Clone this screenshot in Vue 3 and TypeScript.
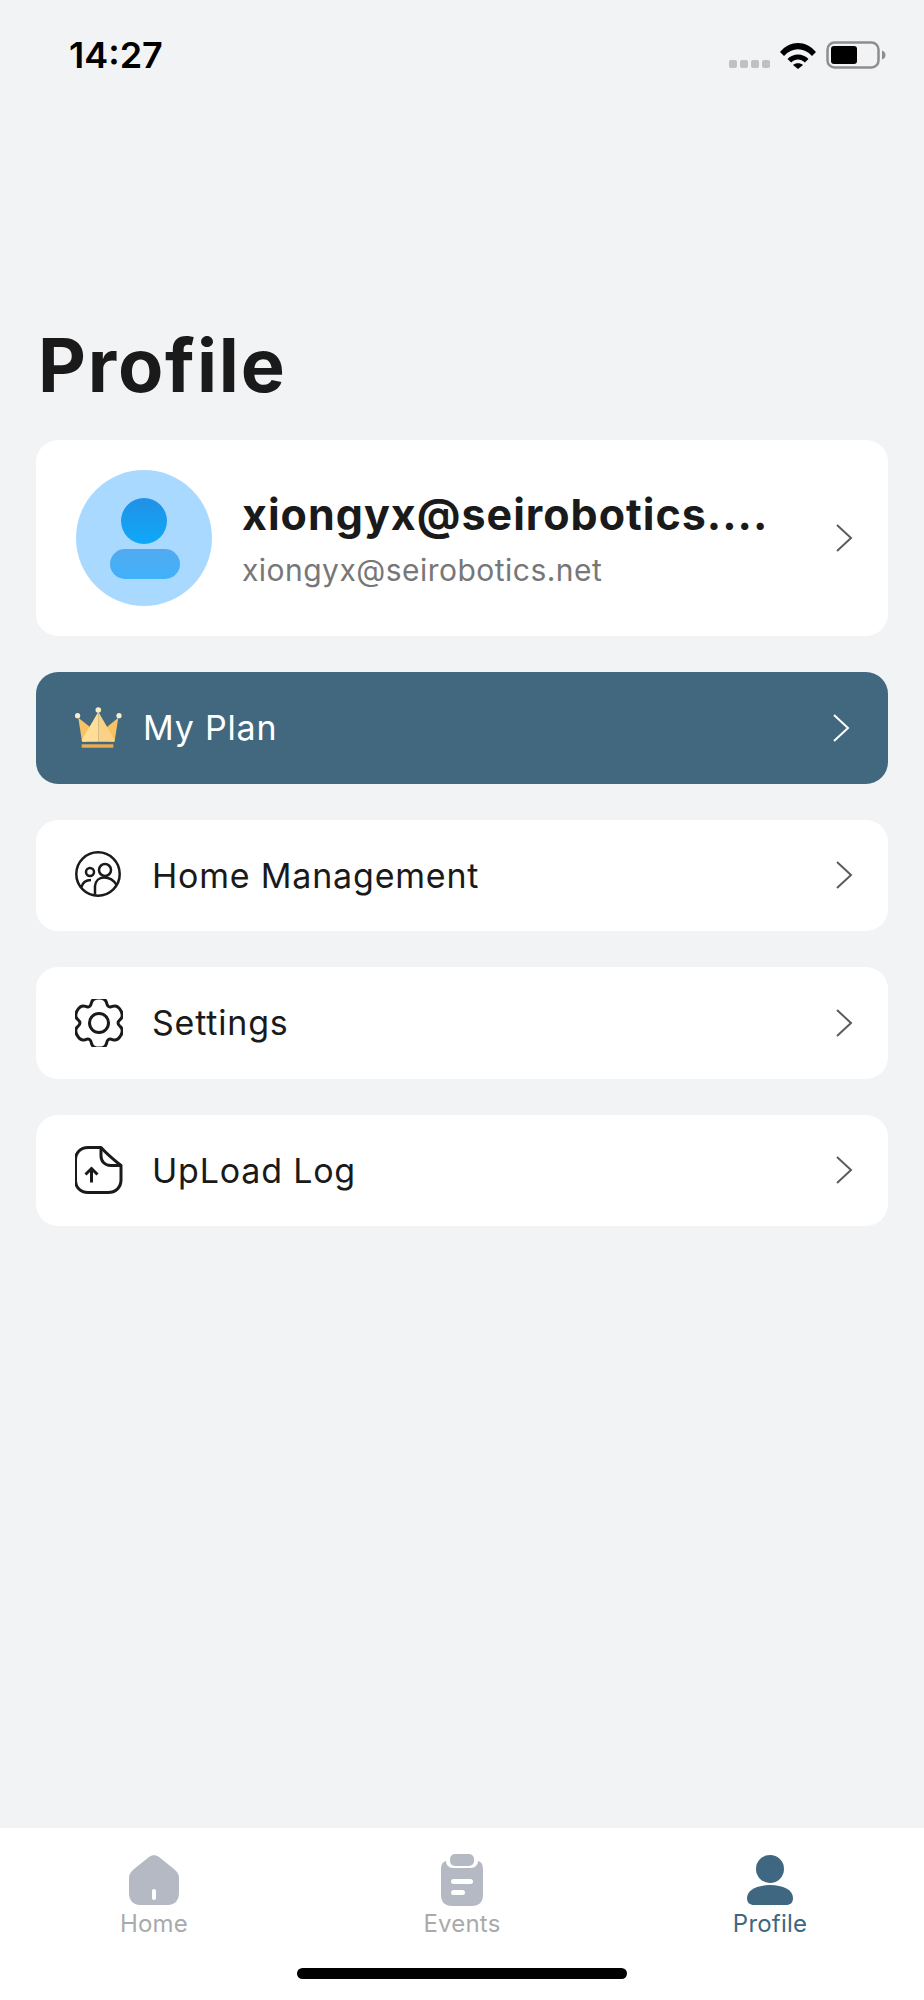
<script setup lang="ts">
const tabs = [
  { key: 'home', label: 'Home', active: false },
  { key: 'events', label: 'Events', active: false },
  { key: 'profile', label: 'Profile', active: true },
]
const rows = [
  { key: 'home', label: 'Home Management', box: '1 1 48 48' },
  { key: 'settings', label: 'Settings', box: '0 0 48 48' },
  { key: 'upload', label: 'UpLoad Log', box: '1 0 48 48' },
]

// six rounded teeth, smoothed through the midpoints of the outline
function buildGear() {
  const pts: [number, number][] = []
  for (let i = 0; i < 6; i++) {
    const a = i * 60 - 90
    for (const [deg, r] of [[a - 30, 17], [a - 15, 26], [a + 15, 26]]) {
      const rad = (deg * Math.PI) / 180
      pts.push([24 + r * Math.cos(rad), 24 + r * Math.sin(rad)])
    }
  }
  const mid = (p: [number, number], q: [number, number]) =>
    `${((p[0] + q[0]) / 2).toFixed(2)} ${((p[1] + q[1]) / 2).toFixed(2)}`
  let d = `M${mid(pts[pts.length - 1], pts[0])}`
  pts.forEach((p, i) => {
    d += `Q${p[0].toFixed(2)} ${p[1].toFixed(2)} ${mid(p, pts[(i + 1) % pts.length])}`
  })
  return d + 'Z'
}
const gearPath = buildGear()
</script>

<template>
  <div class="page">
    <div class="status">
      <span class="time">14:27</span>
      <div class="status-icons">
        <div class="signal"><i /><i /><i /><i /></div>
        <svg class="wifi" width="36" height="28" viewBox="0 0 36 28">
          <path d="M0 11C10-1 26-1 36 11L32 15C24 6 12 6 4 15Z" fill="#000" />
          <path d="M7.5 18C13 12 23 12 28.500 18L24.800 21.500C21 17.500 15 17.500 11.200 21.500Z" fill="#000" />
          <path d="M13 24C15.500 21.800 20.500 21.800 23 24L18 28Z" fill="#000" />
        </svg>
        <svg class="battery" width="60" height="28" viewBox="0 0 60 28">
          <rect x="1.500" y="1.500" width="51" height="25" rx="7" fill="none" stroke="#8e8e8e" stroke-width="2.500" />
          <rect x="5" y="5" width="26" height="18" rx="3" fill="#000" />
          <path d="M56 9.500C58.500 10.500 59.500 12 59.500 14C59.500 16 58.500 17.500 56 18.500Z" fill="#8e8e8e" />
        </svg>
      </div>
    </div>

    <h1 class="title">Profile</h1>

    <div class="content">
      <div class="card account">
        <div class="avatar">
          <svg width="136" height="136" viewBox="0 0 136 136">
            <defs>
              <linearGradient id="head" x1="0" y1="0" x2="0" y2="1">
                <stop offset="0" stop-color="#2290e6" />
                <stop offset="1" stop-color="#0ea9f8" />
              </linearGradient>
              <linearGradient id="body" x1="0" y1="0" x2="0" y2="1">
                <stop offset="0" stop-color="#52aaf0" />
                <stop offset="1" stop-color="#3fb2fa" />
              </linearGradient>
            </defs>
            <circle cx="68" cy="68" r="68" fill="#aad9ff" />
            <circle cx="68" cy="51" r="23" fill="url(#head)" />
            <rect x="34" y="79" width="70" height="30" rx="15" fill="url(#body)" />
          </svg>
        </div>
        <div class="account-text">
          <div class="account-name">xiongyx@seirobotics....</div>
          <div class="account-mail">xiongyx@seirobotics.net</div>
        </div>
        <svg class="chevron" width="18" height="30" viewBox="0 0 18 30">
          <path d="M2 2L16 15L2 28" fill="none" stroke="#5c5c5c" stroke-width="2" />
        </svg>
      </div>

      <div class="card row plan">
        <svg class="row-icon" width="48" height="42" viewBox="0 0 48 42">
          <path d="M3.300 10.700L15 20L11 34.700H8C7.300 34.700 7 34.300 6.900 33.700Z" fill="#f6c266" />
          <path d="M43.300 10.700L32 20L36 34.700H38.500C39.200 34.700 39.600 34.300 39.700 33.700Z" fill="#f6c266" />
          <path d="M23.300 4.700L6.900 33C6.700 34 7.300 34.700 8 34.700H23.300Z" fill="#ffdf98" />
          <path d="M23.300 4.700L39.700 33C39.900 34 39.300 34.700 38.500 34.700H23.300Z" fill="#fbd285" />
          <rect x="6.700" y="37.300" width="31.600" height="3.400" fill="#eeab4c" />
          <circle cx="2.600" cy="8.700" r="2.600" fill="#fbecc8" />
          <circle cx="23.300" cy="3" r="2.800" fill="#fbecc8" />
          <circle cx="44" cy="8.700" r="2.600" fill="#fbecc8" />
        </svg>
        <span class="row-label plan-label">My Plan</span>
        <svg class="chevron" width="18" height="30" viewBox="0 0 18 30">
          <path d="M2 2L16 15L2 28" fill="none" stroke="#fff" stroke-width="2" />
        </svg>
      </div>

      <div v-for="row in rows" :key="row.key" class="card row">
        <svg class="row-icon" width="48" height="48" :viewBox="row.box" fill="none" stroke="#1a1a1a" stroke-width="2.500">
          <template v-if="row.key === 'home'">
            <circle cx="24" cy="24" r="21.700" />
            <circle cx="16" cy="22" r="4" />
            <circle cx="31" cy="20" r="6" />
            <path d="M7.500 37C8.500 33 12 30 17 30" />
            <path d="M21 44.500V36C21.500 31 25 27.500 30 27.500C36 27.500 40 30.500 42.500 35" />
          </template>
          <template v-else-if="row.key === 'settings'">
            <circle cx="24" cy="24" r="9.500" stroke-width="3" />
            <path :d="gearPath" stroke-width="3" stroke-linejoin="round" />
          </template>
          <template v-else>
            <path d="M27 1.500H14C6.500 1.500 1.500 6.500 1.500 14V34C1.500 41.500 6.500 46.500 14 46.500H34C41.500 46.500 47 41.500 47 34V19.500C40 14 33 8 27 1.500Z" stroke-width="3" stroke-linejoin="round" />
            <path d="M27 1.500V10C27 15.500 31 19.500 36.500 19.500H47" stroke-width="3" />
            <path d="M17.500 36.500V23M11.500 28.500L17.500 22.500L23.500 28.500" stroke-width="3" />
          </template>
        </svg>
        <span class="row-label">{{ row.label }}</span>
        <svg class="chevron" width="18" height="30" viewBox="0 0 18 30">
          <path d="M2 2L16 15L2 28" fill="none" stroke="#5c5c5c" stroke-width="2" />
        </svg>
      </div>
    </div>

    <div class="tabbar">
      <div class="tabs">
        <div v-for="tab in tabs" :key="tab.key" class="tab" :class="{ active: tab.active }">
          <svg width="52" height="52" viewBox="0 0 52 52">
            <template v-if="tab.key === 'home'">
              <path d="M21 3C24 0.500 28 0.500 31 3L46 15C49 17.500 51 20 51 24V39C51 46 47 51 40 51H12C5 51 1 46 1 39V24C1 20 3 17.500 6 15Z" fill="#b5b9c4" />
              <rect x="24" y="35" width="4" height="11" rx="2" fill="#fff" />
            </template>
            <template v-else-if="tab.key === 'events'">
              <path d="M10 7C6 8 5 11 5 16V41C5 48 9 52 16 52H36C43 52 47 48 47 41V16C47 11 46 8 42 7C42 11 39 14 35 14H17C13 14 10 11 10 7Z" fill="#b5b9c4" />
              <rect x="14" y="0" width="24" height="12" rx="5" fill="#b5b9c4" />
              <rect x="15" y="25" width="22" height="5" rx="2.500" fill="#fff" />
              <rect x="15" y="36" width="14" height="5" rx="2.500" fill="#fff" />
            </template>
            <template v-else>
              <circle cx="26" cy="15" r="14" fill="#3f6781" />
              <path d="M3 44C3 36 13 31 26 31C39 31 49 36 49 44C49 49 46 51 42 51H10C6 51 3 49 3 44Z" fill="#3f6781" />
            </template>
          </svg>
          <span class="tab-label">{{ tab.label }}</span>
        </div>
      </div>
      <div class="home-bar" />
    </div>
  </div>
</template>

<style scoped>
.page {
  display: flex;
  flex-direction: column;
  width: 924px;
  height: 2000px;
  background: #f2f3f5;
  font-family: Inter, 'Noto Sans', sans-serif;
  color: #1a1a1a;
}

.status {
  display: flex;
  align-items: center;
  justify-content: space-between;
  height: 56px;
  margin-top: 27px;
  padding: 0 38px 0 69px;
}

.time {
  font-size: 36px;
  font-weight: 600;
  color: #000;
}

.status-icons {
  display: flex;
  align-items: flex-end;
  gap: 10px;
}

.signal {
  display: flex;
  gap: 3px;
  margin-bottom: 1px;
}

.signal i {
  width: 8px;
  height: 8px;
  border-radius: 2px;
  background: #c0c0c0;
}

.title {
  margin: 238px 0 0 38px;
  font-size: 74px;
  line-height: 88px;
  font-weight: 700;
  letter-spacing: 1.8px;
}

.content {
  display: flex;
  flex-direction: column;
  gap: 36px;
  margin-top: 31px;
  padding: 0 36px;
}

.card {
  display: flex;
  align-items: center;
  background: #fff;
  border-radius: 22px;
}

.account {
  height: 196px;
  padding: 0 35px 0 40px;
}

.avatar {
  display: flex;
}

.account-text {
  flex: 1;
  margin-left: 30px;
}

.account-name {
  font-size: 43px;
  font-weight: 700;
  line-height: 52px;
  letter-spacing: 1px;
}

.account-mail {
  margin-top: 12px;
  font-size: 30px;
  line-height: 36px;
  color: #777;
  letter-spacing: 0.47px;
}

.row {
  height: 111.5px;
  padding: 0 35px 0 39px;
}

.row-label {
  flex: 1;
  margin-left: 29px;
  font-size: 34px;
  letter-spacing: 0.8px;
}

.plan {
  padding-right: 38px;
  background: #426880;
}

.plan-label {
  margin-left: 20px;
  color: #fff;
}

.tabbar {
  margin-top: auto;
  height: 172px;
  background: #fff;
}

.tabs {
  display: grid;
  grid-template-columns: repeat(3, 1fr);
  padding-top: 26px;
}

.tab {
  display: flex;
  flex-direction: column;
  align-items: center;
  color: #aaa;
}

.tab.active {
  color: #3f6781;
}

.tab-label {
  margin-top: 4px;
  font-size: 24px;
  line-height: 28px;
  letter-spacing: 0.2px;
}

.home-bar {
  width: 330px;
  height: 11px;
  margin: 30px auto 0;
  border-radius: 6px;
  background: #000;
}
</style>
